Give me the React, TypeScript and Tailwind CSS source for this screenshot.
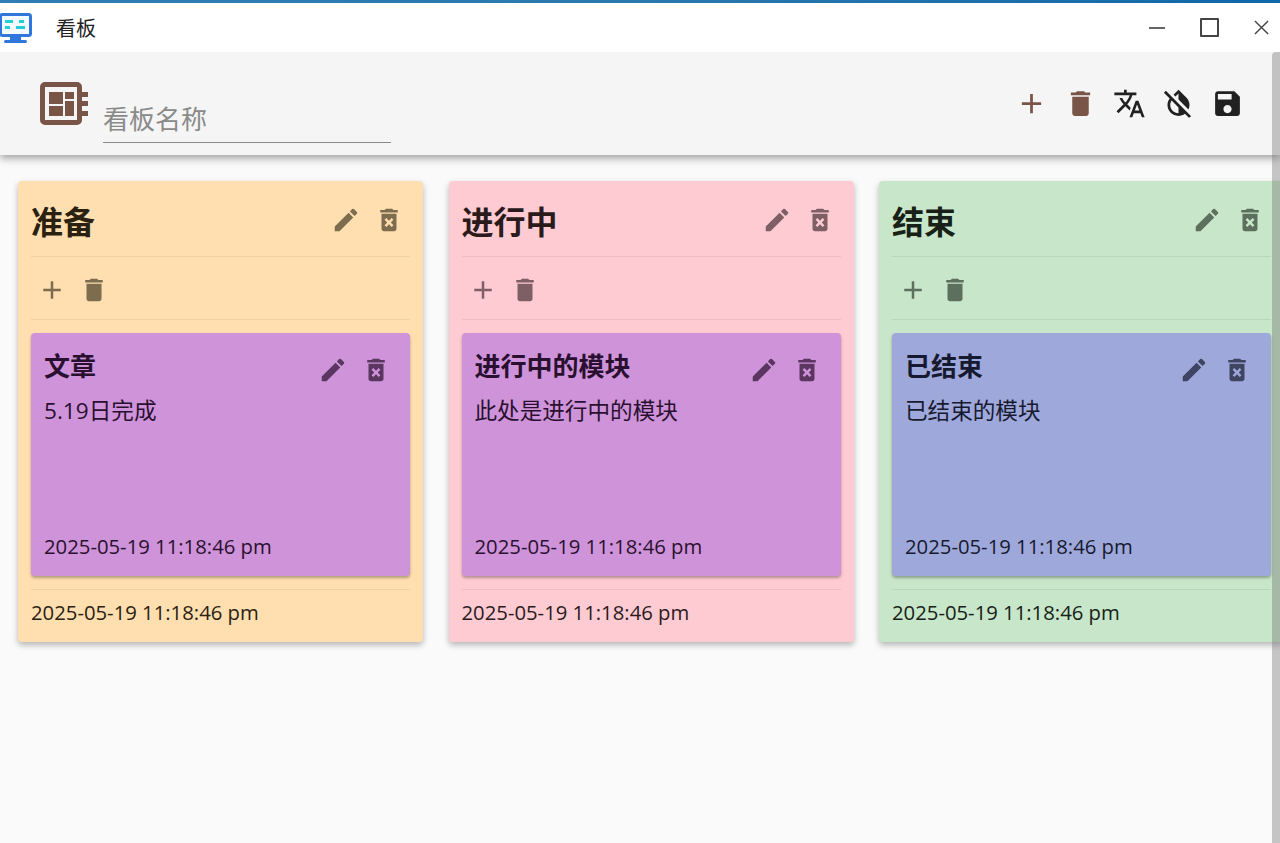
const P = {
  add: "M19 13h-6v6h-2v-6H5v-2h6V5h2v6h6v2z",
  del: "M6 19c0 1.1.9 2 2 2h8c1.1 0 2-.9 2-2V7H6v12zM19 4h-3.5l-1-1h-5l-1 1H5v2h14V4z",
  delx: "M6 19c0 1.1.9 2 2 2h8c1.1 0 2-.9 2-2V7H6zm2.46-7.12 1.41-1.41L12 12.59l2.12-2.12 1.41 1.41L13.41 14l2.12 2.12-1.41 1.41L12 15.41l-2.12 2.12-1.41-1.41L10.59 14zM15.5 4l-1-1h-5l-1 1H5v2h14V4z",
  edit: "M3 17.25V21h3.75L17.81 9.94l-3.75-3.75L3 17.25zM20.71 7.04c.39-.39.39-1.02 0-1.41l-2.34-2.34a.9959.9959 0 0 0-1.41 0l-1.83 1.83 3.75 3.75 1.83-1.83z",
  tr: "m12.87 15.07-2.54-2.51.03-.03c1.74-1.94 2.98-4.17 3.71-6.53H17V4h-7V2H8v2H1v1.99h11.17C11.5 7.92 10.44 9.75 9 11.35 8.07 10.32 7.3 9.19 6.69 8h-2c.73 1.63 1.73 3.17 2.98 4.56l-5.09 5.02L4 19l5-5 3.11 3.11.76-2.04zM18.5 10h-2L12 22h2l1.12-3h4.75L21 22h2l-4.5-12zm-2.62 7 1.62-4.33L19.12 17h-3.24z",
  off: "M21.19 21.19 2.81 2.81 1.39 4.22l4.2 4.2c-1 1.31-1.6 2.94-1.6 4.7C4 17.48 7.58 21 12 21c1.75 0 3.36-.6 4.67-1.6l2.9 2.9 1.62-1.11zM12 19.01c-3.31 0-6-2.63-6-5.87 0-1.19.36-2.32 1.02-3.28L12 14.83v4.18zM8.38 5.56 12 2l5.65 5.56C19.1 8.99 20 10.96 20 13.13c0 1.18-.27 2.29-.74 3.3L12 9.17V4.81L9.8 6.97 8.38 5.56z",
  save: "M17 3H5c-1.11 0-2 .9-2 2v14c0 1.1.89 2 2 2h14c1.1 0 2-.9 2-2V7l-4-4zm-5 16c-1.66 0-3-1.34-3-3s1.34-3 3-3 3 1.34 3 3-1.34 3-3 3zm3-10H5V5h10v4z",
};

function I({ d, className }: { d: string; className: string }) {
  return (
    <svg viewBox="0 0 24 24" className={className} fill="currentColor">
      <path d={d} />
    </svg>
  );
}

function Card({ title, text, bg, ink }: { title: string; text: string; bg: string; ink: string }) {
  return (
    <div className={`mt-[13px] h-[243px] rounded-[4px] px-[13px] pt-[13px] flex flex-col shadow-[0_2px_3px_rgba(0,0,0,0.3)] ${bg} ${ink}`}>
      <div className="flex justify-between">
        <div className="text-[26px] leading-[42px] h-[42px] -mt-[1px] font-bold">{title}</div>
        <div className="flex gap-[13px] pr-[6px] pt-[9px] opacity-70">
          <I d={P.edit} className="w-[30px] h-[30px]" />
          <I d={P.delx} className="w-[30px] h-[30px]" />
        </div>
      </div>
      <div className="text-[22.6px] leading-[30px] mt-[9px]">{text}</div>
      <div className="mt-auto mb-[15px] text-[20.3px] leading-[30px]">2025-05-19 11:18:46 pm</div>
    </div>
  );
}

function Column({ title, bg, cardBg, text, cardTitle, cardInk, line, ink }: { title: string; bg: string; cardBg: string; text: string; cardTitle: string; cardInk: string; line: string; ink: string }) {
  return (
    <div className={`w-[405px] shrink-0 h-[461px] rounded-[4px] px-[13px] ${bg} ${ink} shadow-[0_3px_6px_rgba(0,0,0,0.28)]`}>
      <div className={`h-[76px] flex justify-between border-b ${line}`}>
        <div className="text-[32px] font-bold leading-[82px]">{title}</div>
        <div className="flex gap-[13px] pr-[6px] pt-[24px] opacity-60">
          <I d={P.edit} className="w-[30px] h-[30px]" />
          <I d={P.delx} className="w-[30px] h-[30px]" />
        </div>
      </div>
      <div className={`h-[63px] flex items-center gap-[12px] pl-[6px] pt-[3px] border-b ${line}`}>
        <I d={P.add} className="w-[30px] h-[30px] opacity-60" />
        <I d={P.del} className="w-[30px] h-[30px] opacity-60" />
      </div>
      <Card title={cardTitle} text={text} bg={cardBg} ink={cardInk} />
      <div className={`mt-[13px] border-b ${line}`} />
      <div className="text-[20.3px] leading-[30px] mt-[7px]">2025-05-19 11:18:46 pm</div>
    </div>
  );
}

export default function App() {
  return (
    <div className="relative w-[1280px] h-[843px] overflow-hidden bg-[#fafafa] font-['Open_Sans','Noto_Sans_CJK_SC',sans-serif] text-[#1a1a1a]">
      <div className="relative z-10 h-[3px] bg-gradient-to-r from-[#2f7fb5] via-[#2a79ad] to-[#0f67a8]" />
      <div className="relative z-10 h-[49px] bg-white flex items-center">
        <svg viewBox="0 0 34 32" className="w-[34px] h-[32px] -ml-[1px] mt-[3px]">
          <rect x="1.5" y="1.5" width="30" height="21" rx="2" fill="#f2fbfd" stroke="#2f77dc" strokeWidth="3" />
          <rect x="11" y="24" width="11" height="4" fill="#2f77dc" />
          <rect x="5" y="27" width="23" height="3" rx="1.5" fill="#2f77dc" />
          <rect x="6" y="7" width="8" height="3" fill="#25cdd8" />
          <rect x="20" y="7" width="5" height="3" fill="#25cdd8" />
          <rect x="6" y="13" width="5" height="3" fill="#25cdd8" />
          <rect x="17" y="13" width="9" height="3" fill="#25cdd8" />
        </svg>
        <span className="ml-[23px] mt-[2px] text-[20px] text-[#222]">看板</span>
        <div className="ml-auto flex items-center text-[#444]">
          <svg viewBox="0 0 16 2" className="w-[16px] h-[2px] mr-[35px]"><rect width="16" height="2" fill="#666" /></svg>
          <div className="w-[19px] h-[19px] border-2 border-[#444] rounded-[1px] mr-[35px]" />
          <svg viewBox="0 0 16 16" className="w-[15px] h-[15px] mr-[11px]"><path d="M1 1 15 15M15 1 1 15" stroke="#444" strokeWidth="1.5" /></svg>
        </div>
      </div>
      <div className="relative h-[103px] bg-[#f5f5f5] shadow-[0_3px_8px_rgba(0,0,0,0.38)] flex">
        <svg viewBox="0 0 48 44" className="absolute left-[40px] top-[30px] w-[48px] h-[44px] text-[#795548]" fill="currentColor">
          <path fillRule="evenodd" d="M5 0h32a5 5 0 0 1 5 5v33a5 5 0 0 1-5 5H5a5 5 0 0 1-5-5V5a5 5 0 0 1 5-5zm0 5v33h32V5z" />
          <rect x="9" y="10" width="14" height="12" /><rect x="25" y="10" width="9" height="7" />
          <rect x="9" y="24" width="14" height="10" /><rect x="25" y="19" width="9" height="15" />
          <rect x="42" y="10" width="6" height="5" /><rect x="42" y="19" width="6" height="5" /><rect x="42" y="29" width="6" height="5" />
        </svg>
        <div className="absolute left-[103px] top-[46px] w-[288px] h-[45px] border-b border-[#8a8a8a] text-[26px] leading-[42px] text-[#8a8a8a]">看板名称</div>
        <div className="ml-auto mr-[36px] mt-[35px] flex gap-[16px] h-[33px]">
          <I d={P.add} className="w-[33px] h-[33px] text-[#795548]" />
          <I d={P.del} className="w-[33px] h-[33px] text-[#795548]" />
          <I d={P.tr} className="w-[33px] h-[33px] text-[#212121]" />
          <I d={P.off} className="w-[33px] h-[33px] text-[#212121]" />
          <I d={P.save} className="w-[33px] h-[33px] text-[#212121]" />
        </div>
      </div>
      <div className="flex gap-[25.5px] pl-[18px] pt-[26px]">
        <Column title="准备" bg="bg-[#ffdfb0]" cardBg="bg-[#ce93d8]" cardTitle="文章" text="5.19日完成" cardInk="text-[#2a1030]" line="border-[#f0d0a0]" ink="text-[#2a2110]" />
        <Column title="进行中" bg="bg-[#ffcbd2]" cardBg="bg-[#ce93d8]" cardTitle="进行中的模块" text="此处是进行中的模块" cardInk="text-[#2a1030]" line="border-[#eebcc3]" ink="text-[#2a1a1c]" />
        <Column title="结束" bg="bg-[#c8e6c9]" cardBg="bg-[#9fa8da]" cardTitle="已结束" text="已结束的模块" cardInk="text-[#161a30]" line="border-[#b8d6b9]" ink="text-[#172117]" />
      </div>
      <div className="absolute right-0 top-[52px] bottom-0 w-[8px] rounded-tl-[4px] bg-[rgba(110,110,110,0.38)]" />
    </div>
  );
}
